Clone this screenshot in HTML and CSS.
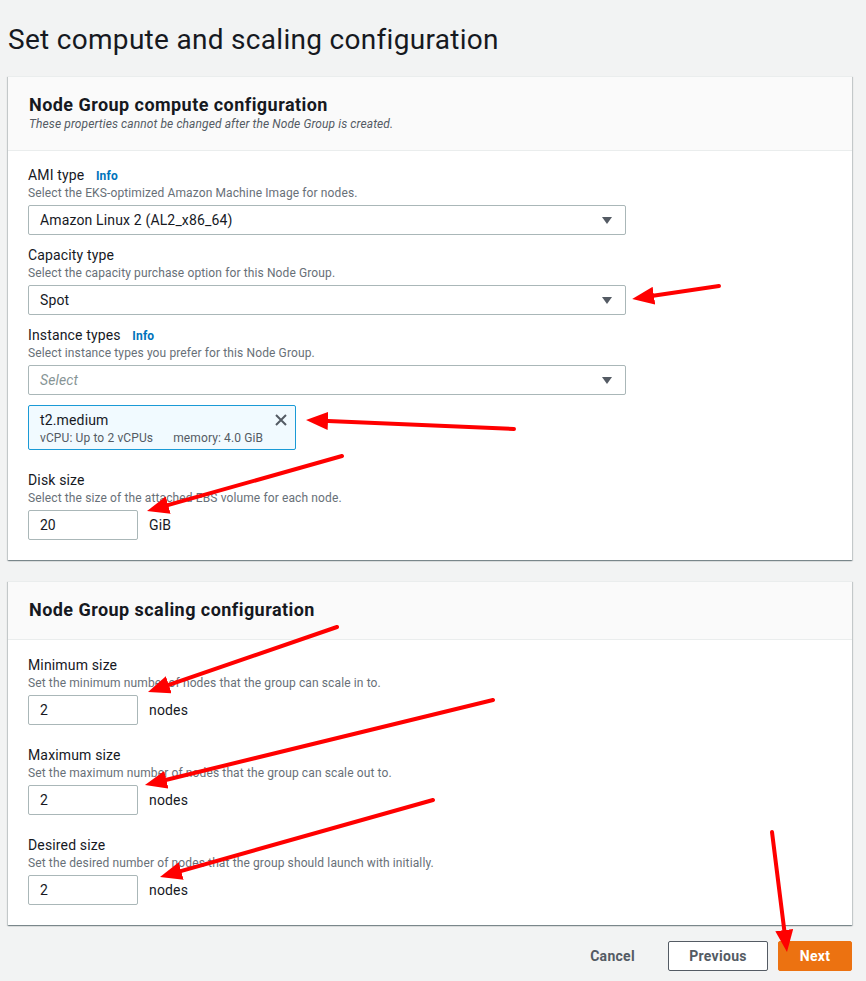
FILE: index.html
```html
<!DOCTYPE html>
<html lang="en">
<head>
<meta charset="utf-8">
<title>Set compute and scaling configuration</title>
<link rel="stylesheet" href="styles.css">
</head>
<body>
<div class="page">
  <h1 class="page-title">Set compute and scaling configuration</h1>

  <section class="card">
    <header class="card-header">
      <h2 class="card-title">Node Group compute configuration</h2>
      <p class="card-subtitle">These properties cannot be changed after the Node Group is created.</p>
    </header>
    <div class="card-body compact">
      <div class="field">
        <div class="label">AMI type <a class="info">Info</a></div>
        <div class="desc">Select the EKS-optimized Amazon Machine Image for nodes.</div>
        <div class="select"><span>Amazon Linux 2 (AL2_x86_64)</span><span class="caret"></span></div>
      </div>
      <div class="field">
        <div class="label">Capacity type</div>
        <div class="desc">Select the capacity purchase option for this Node Group.</div>
        <div class="select"><span>Spot</span><span class="caret"></span></div>
      </div>
      <div class="field">
        <div class="label">Instance types <a class="info">Info</a></div>
        <div class="desc">Select instance types you prefer for this Node Group.</div>
        <div class="select"><span class="placeholder">Select</span><span class="caret"></span></div>
        <div class="token">
          <div class="token-text">
            <div class="token-name">t2.medium</div>
            <div class="token-meta"><span>vCPU: Up to 2 vCPUs</span><span>memory: 4.0 GiB</span></div>
          </div>
          <svg class="token-x" width="12" height="12" viewBox="0 0 12 12"><path d="M1 1 L11 11 M11 1 L1 11" stroke="#545b64" stroke-width="2" fill="none"/></svg>
        </div>
      </div>
      <div class="field spaced">
        <div class="label">Disk size</div>
        <div class="desc">Select the size of the attached EBS volume for each node.</div>
        <div class="num-row"><div class="num">20</div><span class="unit">GiB</span></div>
      </div>
    </div>
  </section>

  <section class="card">
    <header class="card-header">
      <h2 class="card-title">Node Group scaling configuration</h2>
    </header>
    <div class="card-body wide">
      <div class="field">
        <div class="label">Minimum size</div>
        <div class="desc">Set the minimum number of nodes that the group can scale in to.</div>
        <div class="num-row"><div class="num">2</div><span class="unit">nodes</span></div>
      </div>
      <div class="field">
        <div class="label">Maximum size</div>
        <div class="desc">Set the maximum number of nodes that the group can scale out to.</div>
        <div class="num-row"><div class="num">2</div><span class="unit">nodes</span></div>
      </div>
      <div class="field">
        <div class="label">Desired size</div>
        <div class="desc">Set the desired number of nodes that the group should launch with initially.</div>
        <div class="num-row"><div class="num">2</div><span class="unit">nodes</span></div>
      </div>
    </div>
  </section>

  <div class="actions">
    <button class="btn btn-link">Cancel</button>
    <button class="btn btn-normal">Previous</button>
    <button class="btn btn-primary">Next</button>
  </div>
</div>

<svg class="annotations" width="866" height="981" viewBox="0 0 866 981">
  <defs>
    <marker id="head" markerUnits="userSpaceOnUse" markerWidth="24" markerHeight="18" refX="6" refY="9" orient="auto">
      <path d="M0,0 L22,9 L0,18 z" fill="#ff0000"/>
    </marker>
  </defs>
  <g stroke="#ff0000" stroke-width="4" stroke-linecap="round" fill="none" marker-end="url(#head)">
    <line x1="719" y1="286" x2="648" y2="296.6"/>
    <line x1="514" y1="429" x2="322" y2="420.7"/>
    <line x1="342" y1="456" x2="162.4" y2="506.7"/>
    <line x1="337" y1="627" x2="163.1" y2="686.8"/>
    <line x1="493" y1="700" x2="160.5" y2="781.2"/>
    <line x1="433" y1="800" x2="175.4" y2="872.6"/>
    <line x1="772" y1="832" x2="785" y2="936.1"/>
  </g>
</svg>
</body>
</html>
```

FILE: styles.css
```css
* { box-sizing: border-box; }

body {
  margin: 0;
  background: #f2f3f3;
  font-family: Roboto, "Liberation Sans", sans-serif;
  color: #16191f;
  position: relative;
}

.page {
  padding: 23px 14px 12px 8px;
}

.page-title {
  margin: 0 0 19px 0;
  font-size: 28px;
  line-height: 34px;
  font-weight: 400;
  letter-spacing: 0.3px;
  color: #16191f;
}

.card {
  background: #fff;
  border-top: 1px solid #eaeded;
  box-shadow: 0 1px 1px 0 rgba(0,28,36,.3), 1px 1px 1px 0 rgba(0,28,36,.15), -1px 1px 1px 0 rgba(0,28,36,.15);
  margin-bottom: 21px;
}

.card-header {
  background: #fafafa;
  border-bottom: 1px solid #eaeded;
  padding: 17px 20px 18px 21px;
}

.card-title {
  margin: 0;
  font-size: 18px;
  line-height: 22px;
  font-weight: 700;
  letter-spacing: 0.45px;
}

.card-subtitle {
  margin: 0;
  font-size: 12px;
  line-height: 16px;
  font-style: italic;
  color: #545b64;
  letter-spacing: 0.1px;
}

.card-body {
  padding: 14px 20px 20px 20px;
  display: flex;
  flex-direction: column;
}

.card-body.compact { gap: 10px; }
.card-body.wide { gap: 20px; padding-top: 15px; }

.field.spaced { margin-top: 10px; }

.label {
  font-size: 14px;
  line-height: 20px;
  letter-spacing: 0.15px;
}

.info {
  font-size: 12px;
  line-height: 14px;
  font-weight: 700;
  color: #0073bb;
  margin-left: 8px;
}

.desc {
  font-size: 12px;
  line-height: 16px;
  color: #687078;
  margin-bottom: 4px;
  letter-spacing: 0.12px;
}

.select {
  width: 598px;
  height: 30px;
  border: 1px solid #aab7b8;
  border-radius: 2px;
  background: #fff;
  display: flex;
  align-items: center;
  justify-content: space-between;
  padding: 0 13px 0 11px;
  font-size: 14px;
  letter-spacing: 0.15px;
}

.placeholder {
  color: #879596;
  font-style: italic;
}

.caret {
  width: 0;
  height: 0;
  border-left: 5px solid transparent;
  border-right: 5px solid transparent;
  border-top: 7px solid #545b64;
}

.token {
  margin-top: 10px;
  width: 268px;
  height: 45px;
  background: #f1faff;
  border: 1px solid #1a9ad6;
  border-radius: 2px;
  padding: 4px 8px 3px 11px;
  display: flex;
  justify-content: space-between;
  align-items: flex-start;
}

.token-name {
  font-size: 14px;
  line-height: 20px;
  letter-spacing: 0.15px;
}

.token-meta {
  font-size: 12px;
  line-height: 16px;
  color: #545b64;
  display: flex;
  gap: 20px;
  letter-spacing: 0.12px;
}

.token-x {
  margin-top: 4px;
}

.num-row {
  display: flex;
  align-items: center;
  gap: 11px;
}

.num {
  width: 110px;
  height: 30px;
  border: 1px solid #aab7b8;
  border-radius: 2px;
  background: #fff;
  padding: 0 11px;
  font-size: 14px;
  line-height: 28px;
}

.unit {
  font-size: 14px;
  letter-spacing: 0.15px;
}

.actions {
  display: flex;
  justify-content: flex-end;
  gap: 10px;
  margin-top: -5px;
}

.btn {
  font-family: inherit;
  font-size: 14px;
  font-weight: 700;
  letter-spacing: 0.3px;
  height: 30px;
  border-radius: 2px;
  padding: 0 20px;
  color: #545b64;
  background: transparent;
  border: 1px solid transparent;
}

.btn-link { padding: 0 22px; }

.btn-normal {
  background: #fff;
  border-color: #545b64;
  padding: 0 19px;
  min-width: 100px;
}

.btn-primary {
  background: #ec7211;
  border-color: #ec7211;
  color: #fff;
  min-width: 74px;
}

.annotations {
  position: absolute;
  top: 0;
  left: 0;
  pointer-events: none;
}
```
